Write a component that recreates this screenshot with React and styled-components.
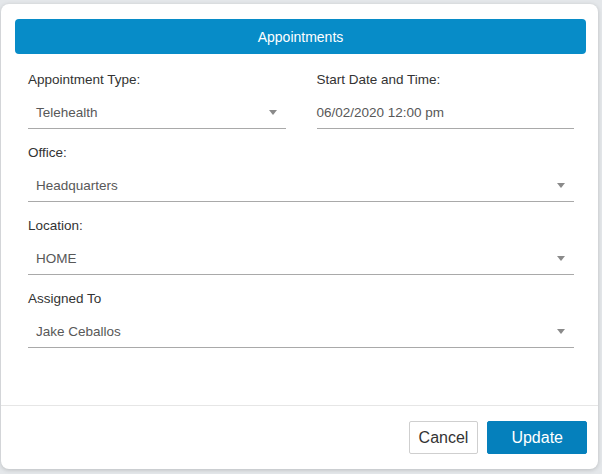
import React from "react";
import styled, { createGlobalStyle } from "styled-components";

const GlobalStyle = createGlobalStyle`
    html,
    body {
        margin: 0;
        padding: 0;
        background: #e4e7ea;
        font-family: "Liberation Sans", Arial, sans-serif;
    }
`;

const Page = styled.div`
    width: 602px;
    height: 474px;
    overflow: hidden;
    padding: 4px 0 0 1px;
    box-sizing: border-box;
`;

const Modal = styled.div`
    width: 597px;
    height: 465px;
    background: #fff;
    border-radius: 8px;
    box-shadow: 0 1px 4px rgba(0, 0, 0, 0.18);
    display: flex;
    flex-direction: column;
`;

const Body = styled.div`
    flex: 1;
    padding: 15px 12px 0 14px;
`;

const Header = styled.div`
    height: 35px;
    background: #078cc8;
    border-radius: 4px;
    color: #fff;
    font-size: 14px;
    display: flex;
    align-items: center;
    justify-content: center;
`;

const Form = styled.div`
    display: grid;
    grid-template-columns: 1fr 1fr;
    column-gap: 31px;
    row-gap: 16px;
    padding: 18px 12px 0 13px;
`;

const Field = styled.div`
    grid-column: ${(p) => (p.$wide ? "1 / span 2" : "auto")};
    display: flex;
    flex-direction: column;
    gap: 8px;
`;

const Label = styled.div`
    font-size: 13.5px;
    line-height: 16px;
    color: #333;
`;

const Control = styled.div`
    height: 33px;
    box-sizing: border-box;
    border-bottom: 1px solid #a9a9a9;
    display: flex;
    align-items: center;
    justify-content: space-between;
    padding: 0 ${(p) => (p.$select ? "9px 0 8px" : "0")};
    font-size: 13.5px;
    color: #585858;
`;

const Caret = styled.span`
    width: 0;
    height: 0;
    border-left: 4px solid transparent;
    border-right: 4px solid transparent;
    border-top: 5px solid #8a8a8a;
`;

const Footer = styled.div`
    border-top: 1px solid #e6e6e6;
    padding: 15px 11px 15px 0;
    display: flex;
    justify-content: flex-end;
    gap: 9px;
`;

const Button = styled.button`
    height: 33px;
    padding: 0 ${(p) => (p.$primary ? "23px" : "9px")};
    font-family: "Liberation Sans", Arial, sans-serif;
    font-size: 16px;
    border-radius: 2px;
    border: 1px solid ${(p) => (p.$primary ? "#0580bc" : "#cfcfcf")};
    background: ${(p) => (p.$primary ? "#0580bc" : "#fff")};
    color: ${(p) => (p.$primary ? "#fff" : "#333")};
    cursor: pointer;
`;

function Select({ value }) {
    return (
        <Control $select>
            <span>{value}</span>
            <Caret />
        </Control>
    );
}

export default function App() {
    return (
        <Page>
            <GlobalStyle />
            <Modal>
                <Body>
                    <Header>Appointments</Header>
                    <Form>
                        <Field>
                            <Label>Appointment Type:</Label>
                            <Select value="Telehealth" />
                        </Field>
                        <Field>
                            <Label>Start Date and Time:</Label>
                            <Control>06/02/2020 12:00 pm</Control>
                        </Field>
                        <Field $wide>
                            <Label>Office:</Label>
                            <Select value="Headquarters" />
                        </Field>
                        <Field $wide>
                            <Label>Location:</Label>
                            <Select value="HOME" />
                        </Field>
                        <Field $wide>
                            <Label>Assigned To</Label>
                            <Select value="Jake Ceballos" />
                        </Field>
                    </Form>
                </Body>
                <Footer>
                    <Button>Cancel</Button>
                    <Button $primary>Update</Button>
                </Footer>
            </Modal>
        </Page>
    );
}
